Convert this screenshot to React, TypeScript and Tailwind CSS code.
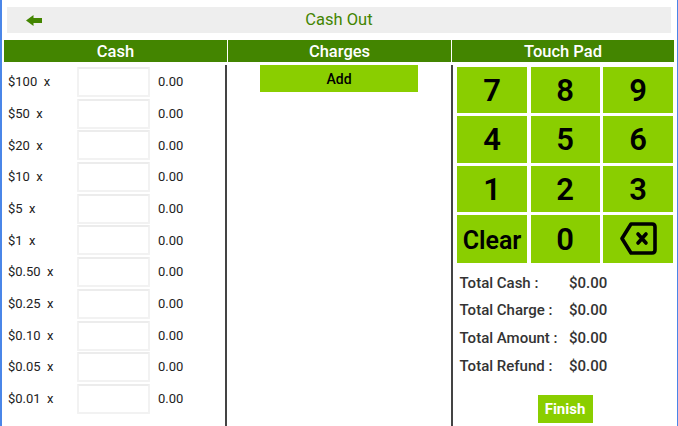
import React from "react";

const denoms = ["$100", "$50", "$20", "$10", "$5", "$1", "$0.50", "$0.25", "$0.10", "$0.05", "$0.01"];
const keys = ["7", "8", "9", "4", "5", "6", "1", "2", "3"];
const totals = ["Total Cash :", "Total Charge :", "Total Amount :", "Total Refund :"];

function Header({ title, className }: { title: string; className: string }) {
  return (
    <div className={`h-[22px] bg-[#438500] text-white text-[16.5px] leading-[24px] font-medium text-center ${className}`}>
      {title}
    </div>
  );
}

function Key({ children, className = "text-[31px] pt-[2px]" }: { children: React.ReactNode; className?: string }) {
  return (
    <div className={`flex items-center justify-center bg-[#8ace00] text-black font-semibold ${className}`}>
      {children}
    </div>
  );
}

export default function App() {
  return (
    <div className="w-[678px] h-[426px] overflow-hidden bg-white flex flex-col border-l-2 border-r border-[#4a86e8] pt-[7px] text-[#222] [font-family:Roboto,sans-serif]">
      <div className="ml-[5px] h-[26px] w-[664px] bg-[#eeeeee] flex items-center relative shrink-0">
        <svg className="absolute left-[19px] top-[8px]" width="16" height="11" viewBox="0 0 16 11">
          <path d="M0 5.5 L7.5 0 V3 H16 V8 H7.5 V11 Z" fill="#438500" />
        </svg>
        <div className="w-full text-center text-[16.5px] text-[#438500]">Cash Out</div>
      </div>

      <div className="flex mt-[7px] ml-[2px] gap-[1px] shrink-0">
        <Header title="Cash" className="w-[223px]" />
        <Header title="Charges" className="w-[223px]" />
        <Header title="Touch Pad" className="w-[222px]" />
      </div>

      <div className="flex flex-1 mt-[3px] min-h-0">
        <div className="w-[225px] pl-[6px] pt-[2px] shrink-0 border-r-2 border-[#444444] flex flex-col gap-[1.7px]">
          {denoms.map((d) => (
            <div key={d} className="flex items-center h-[30px] text-[13px] shrink-0">
              <div className="w-[69px] whitespace-pre">{d}  x</div>
              <div className="w-[73px] h-[30px] bg-white border-2 border-[#f2f2f2] border-t-[#ececec] rounded-[1px]" />
              <div className="ml-[8px]">0.00</div>
            </div>
          ))}
        </div>

        <div className="w-[226px] shrink-0 border-r-2 border-[#444444] flex flex-col items-center">
          <div className="w-[158px] h-[27px] pt-[2px] bg-[#8ace00] text-black text-[14px] font-medium flex items-center justify-center">
            Add
          </div>
        </div>

        <div className="flex-1 pl-[4px] pt-[2px]">
          <div className="grid grid-cols-[70px_69px_70px] grid-rows-[46px_47.5px_46.5px_48.5px] gap-x-[3.5px] gap-y-[2.5px] w-[216px]">
            {keys.map((k) => (
              <Key key={k}>{k}</Key>
            ))}
            <Key className="text-[25px] pt-[4px]">Clear</Key>
            <Key>0</Key>
            <Key className="">
              <svg width="37" height="33" viewBox="0 0 37 33" fill="none" stroke="#000" strokeWidth="3.6" strokeLinejoin="round">
                <path d="M11 2 H32 Q35 2 35 5 V28 Q35 31 32 31 H11 L2 16.5 Z" />
                <path d="M18 12 L26 21 M26 12 L18 21" strokeLinecap="round" />
              </svg>
            </Key>
          </div>

          <div className="flex flex-col gap-[7.6px] mt-[10px] pl-[2.5px] text-[15px] font-medium text-[#333]">
            {totals.map((t) => (
              <div key={t} className="flex h-[20px] items-center">
                <div className="w-[109.5px]">{t}</div>
                <div>$0.00</div>
              </div>
            ))}
          </div>

          <div className="flex justify-center mt-[19px] w-[216px]">
            <div className="w-[55px] h-[28px] bg-[#8ace00] text-white text-[15px] font-bold flex items-center justify-center">
              Finish
            </div>
          </div>
        </div>
      </div>
    </div>
  );
}
